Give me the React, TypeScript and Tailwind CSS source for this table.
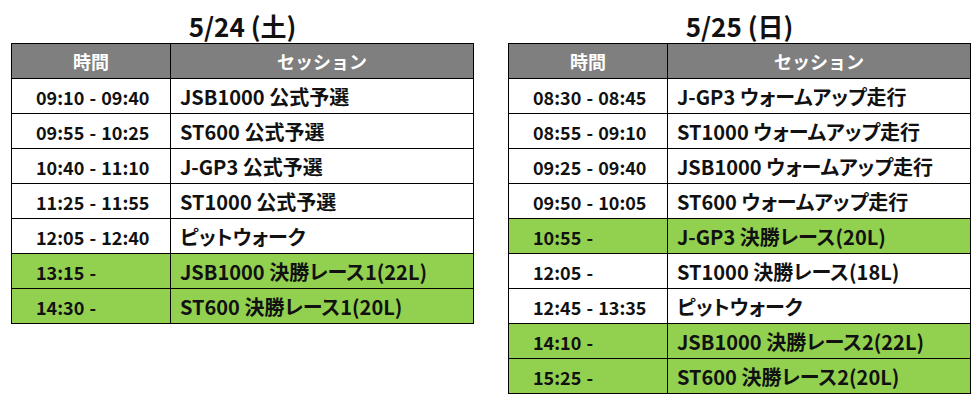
import React from 'react';

type Row = { time: string; session: string; final?: boolean };

const day1: Row[] = [
  { time: '09:10 - 09:40', session: 'JSB1000 公式予選' },
  { time: '09:55 - 10:25', session: 'ST600 公式予選' },
  { time: '10:40 - 11:10', session: 'J-GP3 公式予選' },
  { time: '11:25 - 11:55', session: 'ST1000 公式予選' },
  { time: '12:05 - 12:40', session: 'ピットウォーク' },
  { time: '13:15 -', session: 'JSB1000 決勝レース1(22L)', final: true },
  { time: '14:30 -', session: 'ST600 決勝レース1(20L)', final: true },
];

const day2: Row[] = [
  { time: '08:30 - 08:45', session: 'J-GP3 ウォームアップ走行' },
  { time: '08:55 - 09:10', session: 'ST1000 ウォームアップ走行' },
  { time: '09:25 - 09:40', session: 'JSB1000 ウォームアップ走行' },
  { time: '09:50 - 10:05', session: 'ST600 ウォームアップ走行' },
  { time: '10:55 -', session: 'J-GP3 決勝レース(20L)', final: true },
  { time: '12:05 -', session: 'ST1000 決勝レース(18L)' },
  { time: '12:45 - 13:35', session: 'ピットウォーク' },
  { time: '14:10 -', session: 'JSB1000 決勝レース2(22L)', final: true },
  { time: '15:25 -', session: 'ST600 決勝レース2(20L)', final: true },
];

function DayTable({ title, rows }: { title: string; rows: Row[] }) {
  return (
    <div className="w-[463px]">
      <div className="h-[43px] flex items-end justify-center pb-[4px]">
        <h2 className="text-[26px] font-bold leading-none text-[#111]">{title}</h2>
      </div>
      <div className="border border-black">
        <div className="grid grid-cols-[158px_1fr] h-[34px] bg-[#7f7f7f] text-white text-[18px] font-bold">
          <div className="flex items-center justify-center">時間</div>
          <div className="flex items-center justify-center border-l border-black">セッション</div>
        </div>
        {rows.map((r) => (
          <div
            key={r.time + r.session}
            className={`grid grid-cols-[158px_1fr] h-[35px] border-t border-black font-bold text-[#111] ${r.final ? 'bg-[#92d050]' : 'bg-white'}`}
          >
            <div className="flex items-center pl-6 pt-[2px] text-[18px] [word-spacing:1px]">{r.time}</div>
            <div className="flex items-center border-l border-black pl-[9px] pt-[2px] text-[20px] [font-feature-settings:'palt']">
              {r.session}
            </div>
          </div>
        ))}
      </div>
    </div>
  );
}

export default function App() {
  return (
    <div
      className="w-[980px] h-[407px] bg-white flex gap-[34px] pl-[11px]"
      style={{ fontFamily: '"Noto Sans CJK JP", sans-serif' }}
    >
      <DayTable title="5/24 (土)" rows={day1} />
      <DayTable title="5/25 (日)" rows={day2} />
    </div>
  );
}
